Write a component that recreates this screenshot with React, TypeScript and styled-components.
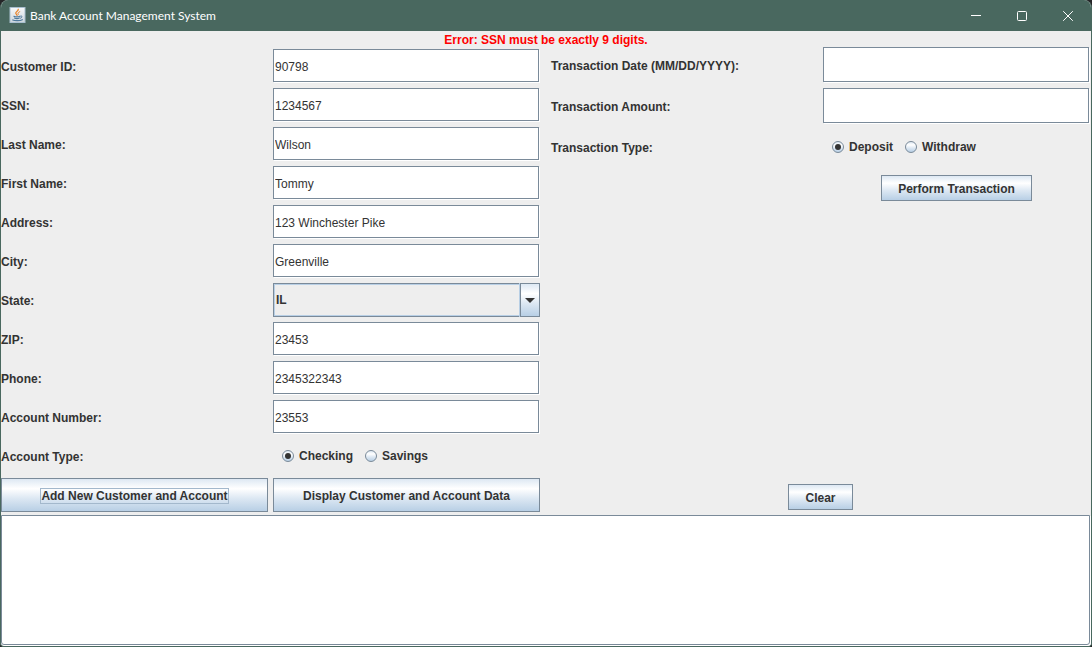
import React from "react";
import styled, { createGlobalStyle } from "styled-components";

const line = "#7a8a99";
const metal = "linear-gradient(#dde8f3 0%, #ffffff 30%, #dde8f3 60%, #b8cfe5 100%)";

const GlobalStyle = createGlobalStyle`
  * { box-sizing: border-box; }
  body {
    margin: 0;
    background: #252527;
    color: #333333;
    font: 12px/16px "Liberation Sans", Arial, sans-serif;
  }
  button, input, select, textarea { font: inherit; color: inherit; margin: 0; border-radius: 0; }
`;

const Window = styled.div`
  display: flex;
  flex-direction: column;
  min-height: 100vh;
  border: 1px solid #49685f;
  border-top: 0;
  border-radius: 8px 8px 4px 4px;
  background: #eeeeee;
  overflow: hidden;
`;

const TitleBar = styled.header`
  display: flex;
  align-items: center;
  height: 31px;
  padding-left: 8px;
  background: #49685f;
  color: #ffffff;
`;

const Title = styled.h1`
  flex: 1;
  margin: 0 0 0 4px;
  font: 12px/16px Lato, "Open Sans", sans-serif;
`;

const WindowButton = styled.button`
  display: grid;
  place-items: center;
  width: 46px;
  height: 31px;
  padding: 0;
  border: 0;
  background: transparent;
`;

const ErrorMessage = styled.p`
  margin: 0;
  height: 16px;
  line-height: 18px;
  text-align: center;
  font-weight: bold;
  color: #ff0000;
`;

const Panels = styled.main`
  display: grid;
  grid-template-columns: 1fr 1fr;
  gap: 11px;
  padding-right: 1px;
`;

const CustomerForm = styled.form`
  display: grid;
  grid-template-columns: 1fr 1fr;
  grid-auto-rows: 34px;
  gap: 5px;
  padding: 2px 0 3px;
`;

const TransactionForm = styled.form`
  display: flex;
  flex-direction: column;
  justify-content: space-between;
  align-items: center;
  padding-bottom: 5px;
`;

const TransactionGrid = styled.div`
  display: grid;
  grid-template-columns: 1fr 1fr;
  grid-auto-rows: 36px;
  gap: 5px;
  width: 100%;
`;

const Label = styled.label`
  align-self: center;
  padding-top: 2px;
  font-weight: bold;
`;

const GroupLabel = styled(Label).attrs({ as: "span" })``;

const TextField = styled.input`
  min-width: 0;
  margin: 0 1px 1px 0;
  padding: 2px 1px 0;
  border: 1px solid ${line};
  outline: 0;
  background: #ffffff;
  box-shadow: 1px 1px 0 #ffffff;
`;

const Combo = styled.div`
  position: relative;
  display: grid;
`;

const ComboSelect = styled.select`
  appearance: none;
  padding: 0 24px 0 2px;
  border: 1px solid ${line};
  outline: 0;
  background: #eeeeee;
  box-shadow: inset 0 0 0 1px #b8cfe5;
  font-weight: bold;
`;

const ComboArrow = styled.span`
  position: absolute;
  top: 0;
  right: 0;
  bottom: 0;
  display: grid;
  place-items: center;
  width: 20px;
  border: 1px solid ${line};
  background: ${metal};
  box-shadow: -1px 0 0 #b8cfe5;
  pointer-events: none;
`;

const RadioGroup = styled.div`
  display: flex;
  align-items: center;
  gap: 12px;
  padding-left: 9px;
`;

const RadioLabel = styled.label`
  display: flex;
  align-items: center;
  gap: 5px;
  font-weight: bold;
`;

const Radio = styled.input.attrs({ type: "radio" })`
  appearance: none;
  display: grid;
  place-items: center;
  width: 12px;
  height: 12px;
  border: 1px solid ${line};
  border-radius: 50%;
  background: ${metal};

  &:checked::before {
    content: "";
    width: 6px;
    height: 6px;
    border-radius: 50%;
    background: #333333;
  }
`;

const Button = styled.button<{ $compact?: boolean }>`
  height: ${(p) => (p.$compact ? "26px" : "auto")};
  padding: 2px 16px 0;
  border: 1px solid ${line};
  background: ${metal};
  font-weight: bold;
`;

const FocusRing = styled.span`
  box-shadow: 0 0 0 1px #a3b8cc;
`;

const ButtonCell = styled.div`
  display: grid;
  place-items: center;
`;

const Output = styled.textarea`
  display: block;
  flex: 1;
  min-height: 80px;
  margin: 0 1px 1px 0;
  padding: 2px;
  border: 1px solid ${line};
  border-radius: 0 0 3px 3px;
  outline: 0;
  background: #ffffff;
  box-shadow: 1px 1px 0 #ffffff;
  resize: none;
`;

const JavaIcon = () => (
  <svg width="17" height="17" viewBox="0 0 17 17" aria-hidden="true">
    <defs>
      <linearGradient id="tile" x1="0" y1="0" x2="0" y2="1">
        <stop offset="0" stopColor="#f7f9fa" />
        <stop offset="1" stopColor="#ccd5dc" />
      </linearGradient>
    </defs>
    <rect x="1" y="0.5" width="15" height="15" fill="url(#tile)" stroke="#a9bfd0" />
    <g fill="none" strokeLinecap="round">
      <path d="M9.2 2.3c.9 1.6-2.9 2.3-2.4 4 .3.8 1.1 1.1 1 1.9" stroke="#e8832a" strokeWidth="1.3" />
      <path d="M10.8 4.7c-1.4.6-2.2 1.2-1.7 2 .4.6.2 1-.3 1.5" stroke="#e8832a" strokeWidth="1" />
      <path d="M4.9 9.3c1.2.5 4.7.5 6 0M5.5 11c1.3.6 3.6.6 4.8 0M3.8 13c1.8 1 7.5 1 9.5-.3" stroke="#4f7a9c" strokeWidth="1.2" />
      <path d="M11.8 9c1.6-.3 2 1.3-.3 2.2" stroke="#4f7a9c" />
    </g>
  </svg>
);

interface Field {
  id: string;
  label: string;
  value: string;
}

const fieldsBeforeState: Field[] = [
  { id: "customer-id", label: "Customer ID:", value: "90798" },
  { id: "ssn", label: "SSN:", value: "1234567" },
  { id: "last-name", label: "Last Name:", value: "Wilson" },
  { id: "first-name", label: "First Name:", value: "Tommy" },
  { id: "address", label: "Address:", value: "123 Winchester Pike" },
  { id: "city", label: "City:", value: "Greenville" },
];

const fieldsAfterState: Field[] = [
  { id: "zip", label: "ZIP:", value: "23453" },
  { id: "phone", label: "Phone:", value: "2345322343" },
  { id: "account-number", label: "Account Number:", value: "23553" },
];

const transactionFields: Field[] = [
  { id: "date", label: "Transaction Date (MM/DD/YYYY):", value: "" },
  { id: "amount", label: "Transaction Amount:", value: "" },
];

const FieldRows = ({ fields }: { fields: Field[] }) => (
  <>
    {fields.map((f) => (
      <React.Fragment key={f.id}>
        <Label htmlFor={f.id}>{f.label}</Label>
        <TextField id={f.id} type="text" defaultValue={f.value} />
      </React.Fragment>
    ))}
  </>
);

const Choices = ({ name, label, options }: { name: string; label: string; options: string[] }) => (
  <>
    <GroupLabel id={name}>{label}</GroupLabel>
    <RadioGroup role="radiogroup" aria-labelledby={name}>
      {options.map((option, i) => (
        <RadioLabel key={option}>
          <Radio name={name} value={option} defaultChecked={i === 0} />
          {option}
        </RadioLabel>
      ))}
    </RadioGroup>
  </>
);

export default function App() {
  return (
    <>
      <GlobalStyle />
      <Window>
        <TitleBar>
          <JavaIcon />
          <Title>Bank Account Management System</Title>
          <WindowButton aria-label="Minimize">
            <svg width="10" height="10" stroke="#fff" fill="none">
              <path d="M0 4.5h10" />
            </svg>
          </WindowButton>
          <WindowButton aria-label="Maximize">
            <svg width="10" height="10" stroke="#fff" fill="none">
              <rect x=".5" y=".5" width="9" height="9" rx="1" />
            </svg>
          </WindowButton>
          <WindowButton aria-label="Close">
            <svg width="10" height="10" stroke="#fff" fill="none">
              <path d="M.2.2l9.6 9.6M9.8.2L.2 9.8" />
            </svg>
          </WindowButton>
        </TitleBar>
        <ErrorMessage role="alert">Error: SSN must be exactly 9 digits.</ErrorMessage>
        <Panels>
          <CustomerForm>
            <FieldRows fields={fieldsBeforeState} />
            <Label htmlFor="state">State:</Label>
            <Combo>
              <ComboSelect id="state" defaultValue="IL">
                <option>IL</option>
              </ComboSelect>
              <ComboArrow>
                <svg width="10" height="5" fill="#333333" aria-hidden="true">
                  <path d="M0 0h10L5 5z" />
                </svg>
              </ComboArrow>
            </Combo>
            <FieldRows fields={fieldsAfterState} />
            <Choices name="account-type" label="Account Type:" options={["Checking", "Savings"]} />
            <Button type="button">
              <FocusRing>Add New Customer and Account</FocusRing>
            </Button>
            <Button type="button">Display Customer and Account Data</Button>
          </CustomerForm>
          <TransactionForm>
            <TransactionGrid>
              <FieldRows fields={transactionFields} />
              <Choices name="transaction-type" label="Transaction Type:" options={["Deposit", "Withdraw"]} />
              <span />
              <ButtonCell>
                <Button type="button" $compact>Perform Transaction</Button>
              </ButtonCell>
            </TransactionGrid>
            <Button type="reset" $compact>Clear</Button>
          </TransactionForm>
        </Panels>
        <Output aria-label="Customer and account data" />
      </Window>
    </>
  );
}
